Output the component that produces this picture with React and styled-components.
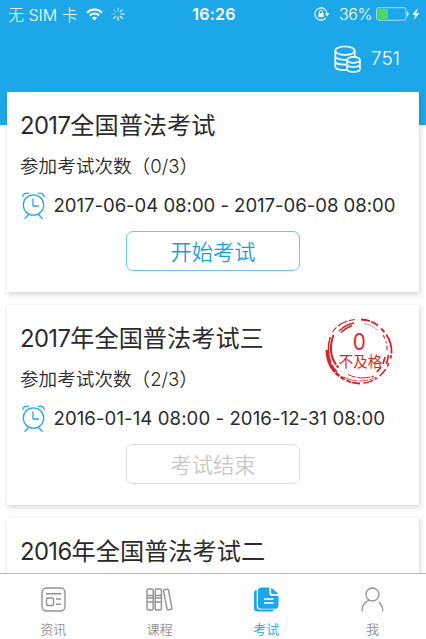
import React from "react";
import styled, { createGlobalStyle } from "styled-components";

const GlobalStyle = createGlobalStyle`
  * {
    box-sizing: border-box;
  }
  body {
    margin: 0;
    background: #fdfdfd;
    font-family: Inter, "Noto Sans CJK SC", sans-serif;
    color: #2b2b2b;
  }
`;

const Page = styled.div`
  width: 426px;
  height: 639px;
  display: flex;
  flex-direction: column;
  overflow: hidden;
`;

// Header
const Header = styled.header`
  flex: none;
  height: 125px;
  background: #1ca7e8;
  color: white;
`;

const StatusBar = styled.div`
  height: 28px;
  padding: 0 6px 0 8px;
  display: grid;
  grid-template-columns: 1fr auto 1fr;
  align-items: center;
  font-size: 16px;
`;

const StatusLeft = styled.div`
  display: flex;
  align-items: center;
  font-weight: 300;
  white-space: nowrap;

  svg {
    margin-left: 8px;
  }
`;

const Time = styled.div`
  font-weight: 600;
  letter-spacing: 0.2px;
`;

const StatusRight = styled.div`
  display: flex;
  align-items: center;
  justify-content: flex-end;
  font-weight: 300;
`;

const Percent = styled.span`
  margin: 0 4px 0 9px;
  letter-spacing: -0.4px;
`;

const Score = styled.div`
  display: flex;
  align-items: center;
  justify-content: flex-end;
  gap: 10px;
  height: 61px;
  padding-right: 26px;
  font-size: 19px;
  font-weight: 300;
  letter-spacing: -0.1px;
`;

// Exam list
const List = styled.main`
  flex: 1;
  min-height: 0;
  margin-top: -33px;
  padding: 0 7px;
  display: flex;
  flex-direction: column;
  gap: 13px;
  overflow: hidden;
`;

const Card = styled.section`
  flex: none;
  position: relative;
  height: 200px;
  padding: 18px 14px 0;
  background: white;
  box-shadow: 1px 2px 5px rgba(0, 0, 0, 0.17);
`;

const Title = styled.h2`
  margin: 0 0 0 -1px;
  height: 32px;
  line-height: 32px;
  font-size: 24.2px;
  font-weight: 370;
  white-space: nowrap;
`;

const Year = styled.span`
  font-size: 23.8px;
  letter-spacing: -0.6px;
`;

const Attempts = styled.p`
  margin: 11px 0 0 -1px;
  height: 26px;
  line-height: 26px;
  font-size: 18.6px;
  font-weight: 350;
  white-space: nowrap;
`;

const Period = styled.div`
  height: 28px;
  margin-top: 12px;
  display: flex;
  align-items: center;
  gap: 7.5px;
  font-size: 18.6px;
  font-weight: 370;
  letter-spacing: ${(props) => props.$tracking};
  white-space: nowrap;
`;

const ExamButton = styled.button`
  display: block;
  width: 174px;
  height: 40px;
  margin: 12px auto 0;
  padding: 0 0 2px;
  border: 1px solid ${(props) => (props.$ended ? "#dedede" : "#6dc6f0")};
  border-radius: 7px;
  background: white;
  color: ${(props) => (props.$ended ? "#c9c9c9" : "#1ca0e2")};
  font-family: inherit;
  font-size: 21.3px;
  font-weight: 350;
`;

const Stamp = styled.div`
  position: absolute;
  top: 12px;
  right: 25px;
  width: 70px;
  height: 70px;
  display: flex;
  flex-direction: column;
  align-items: center;
  color: #e21f26;

  svg {
    position: absolute;
    inset: 0;
  }
`;

const Mark = styled.span`
  margin-top: 12px;
  font-size: 23px;
  font-weight: 400;
  line-height: 26px;
  transform: scaleX(0.9);
`;

const Result = styled.span`
  margin-left: 3px;
  font-size: 14.5px;
  line-height: 13px;
  white-space: nowrap;
`;

// Bottom tabs
const TabBar = styled.nav`
  flex: none;
  position: relative;
  height: 66px;
  border-top: 1px solid #b9b9b9;
  background: #fdfdfd;
  display: grid;
  grid-template-columns: repeat(4, 1fr);
`;

const Tab = styled.div`
  display: flex;
  flex-direction: column;
  align-items: center;
  padding-top: 13px;
  color: ${(props) => (props.$active ? "#1ca7e8" : "#929292")};
  font-size: 13px;
  font-weight: 350;
  line-height: 18px;

  svg {
    margin-bottom: 8px;
  }
`;

const WifiIcon = () => (
  <svg width="17" height="13" viewBox="0 0 17 13" fill="none" stroke="white" strokeWidth="2">
    <path d="M1 4.7C5.2.5 11.8.5 16 4.7M3.8 7.5c2.6-2.6 6.8-2.6 9.4 0" />
    <path d="M8.5 12.4 6 9.8c1.4-1.4 3.6-1.4 5 0Z" fill="white" stroke="none" />
  </svg>
);

const SpinnerIcon = () => (
  <svg width="14" height="14" viewBox="0 0 14 14" stroke="white" strokeWidth="1.2" strokeLinecap="round">
    {[0.55, 0.8, 1, 1, 1, 0.9, 0.35, 0.35].map((opacity, i) => (
      <path key={i} d="M7 4V1" opacity={opacity} transform={`rotate(${i * 45} 7 7)`} />
    ))}
  </svg>
);

const LockIcon = () => (
  <svg width="16" height="14" viewBox="0 0 16 14" fill="none" stroke="white">
    <path d="M11.8 10.8A6.1 6.1 0 1 1 13.1 7" strokeWidth="1.1" />
    <path d="M10.7 6.5h4.8L13.1 9.3Z" fill="white" stroke="none" />
    <rect x="4.5" y="6.2" width="5" height="4" fill="white" stroke="none" />
    <path d="M5.4 6.5V5a1.6 1.6 0 0 1 3.2 0v1.5" />
  </svg>
);

const BatteryIcon = () => (
  <svg width="44" height="14" viewBox="0 0 44 14">
    <rect x=".5" y=".7" width="29.5" height="12.5" rx="2" fill="none" stroke="#a4dcf6" />
    <rect x="1.5" y="1.8" width="10.5" height="10.4" rx="1" fill="#4bd964" />
    <path d="M31 4.5c2 .5 2 4.5 0 5Z" fill="white" />
    <path d="m41.7 1-5.3 6.8h2.9L38 13l5.4-7h-3Z" fill="white" />
  </svg>
);

const CoinsIcon = () => (
  <svg width="27" height="28" viewBox="0 0 27 28" fill="none" stroke="white" strokeWidth="1.7">
    <ellipse cx="11" cy="5.7" rx="9.7" ry="4.2" />
    <path d="M1.3 5.7v16.2c0 1.8 4.6 3.3 11 3.3M20.7 5.7v5.1M1.3 11.3c0 2 4.7 3.7 11 3.5M1.3 16.7c0 1.7 4.4 3 10.7 3" />
    <ellipse cx="19.5" cy="14.9" rx="6.4" ry="3" />
    <path d="M13.1 14.9v9c0 1.8 2.8 3 6.4 3s6.4-1.2 6.4-3v-9M13.1 19.3c0 1.6 2.8 2.7 6.4 2.7s6.4-1.1 6.4-2.7" />
  </svg>
);

const ClockIcon = () => (
  <svg width="25" height="28" viewBox="0 0 25 28" fill="none" stroke="#25a9ea" strokeWidth="1.3" strokeLinecap="round">
    <circle cx="12.5" cy="14" r="10.2" />
    <path d="M12 8v7h5.5M7.3 23.7 4 27.2M17.6 23.7l3.5 3.5" />
    <path d="M1.8 5.5C2 3 4.8 1.4 7.6 2.3M23.2 5.5C23 3 20.2 1.4 17.4 2.3" />
  </svg>
);

// Rough ring made of broken brush strokes
const StampRing = () => (
  <svg width="70" height="70" viewBox="0 0 70 70" fill="none" stroke="#d71f27">
    <path d="M37 2.5c7 .3 12 2.5 17 6" strokeWidth="1.8" strokeDasharray="9 1.5 8 1" />
    <path d="M31 2.5C21 3.5 13 8 8.5 15" strokeWidth="1.2" strokeDasharray="6 1.5 11 2 9" />
    <path d="M57 11.5c9 8 12.5 20 9.5 30" strokeWidth="1.8" strokeDasharray="5 3 20 1.5 4 2" />
    <path d="M65 46c-5 12-15 19-27 20.5" strokeWidth="1.4" strokeDasharray="4 3 9 3 3 2 10" />
    <path d="M36 66.5c-6 0-11-1.5-16-4.5" strokeWidth="1.8" strokeDasharray="8 1 5 2" />
    <path d="M2.8 33C3 46 9 56 20 62" strokeWidth="2.6" strokeDasharray="24 1 5 1.5" />
    <path d="M6.2 20c-4 14-1 28 8 36" strokeWidth="1.5" strokeDasharray="26 2 9" />
    <path d="M9.5 18c-5 14-3 25 6.5 34" strokeWidth="2" strokeDasharray="31 1 3 2" />
    <path d="M20 60c9 5 22 5.5 32 0" strokeWidth=".8" strokeDasharray="14 2 9 1" />
    <path d="M24 57.5c8 4 17 4.5 26 1.5" strokeWidth="1" strokeDasharray="8 2 13 1" />
    <path d="M15 14c4-4 9-7 15-8M17 15.5c3-3 7-5.5 11-7" strokeWidth="1.5" />
    <path d="M40 6.5c6 1 10 3 14 7" strokeWidth=".5" />
    <path d="M59 18c3 5 4.5 10 4 17" strokeWidth="1.1" strokeDasharray="4 3 2 3" />
    <path d="m64.5 38-2 9M61 40l-2 7M57 50l-4 5" strokeWidth="1.7" />
  </svg>
);

const NewsIcon = () => (
  <svg width="25" height="25" viewBox="0 0 25 25" fill="none" stroke="currentColor" strokeWidth="1.4">
    <rect x="1" y="1" width="23" height="23" rx="4.5" />
    <rect x="5.5" y="11" width="7" height="7.5" rx="1.5" />
    <path d="M5 6.8h15M15 12h5M15 17.2h5" />
  </svg>
);

const BooksIcon = () => (
  <svg width="27" height="25" viewBox="0 0 27 25" fill="none" stroke="currentColor" strokeWidth="1.4">
    <rect x="1" y="2" width="6.2" height="21" rx="1.5" />
    <rect x="9.2" y="2" width="6.2" height="21" rx="1.5" />
    <path d="m18.2 2.8 3.1-.6c.6-.1 1 .1 1.1.7l3.5 18.2c.1.6-.1 1-.7 1.1l-3 .6c-.6.1-1-.1-1.1-.7L17.5 3.9c-.1-.6.1-1 .7-1.1Z" />
    <path d="M1 8.5h6.2M1 11h6.2M1 15h6.2M9.2 8.5h6.2M9.2 11h6.2M9.2 15h6.2" />
  </svg>
);

const ExamIcon = () => (
  <svg width="25" height="25" viewBox="0 0 25 25" fill="currentColor">
    <path d="M2.7 3v16.5c0 2 1 3 3 3H20c-.3 1.3-1.3 2-3 2H3.3C1.4 24.5 0 23.3 0 21.3V6c0-2 1-3 2.7-3Z" />
    <path d="M7.5.5h8v6c0 1.5.8 2.3 2.3 2.3h6.7v9.4c0 2.3-1.2 3.5-3.5 3.5H7.5C5 21.7 4 20.5 4 18.2V4C4 1.7 5.2.5 7.5.5Z" />
    <path d="M17.2.5 24.5 7h-6c-.8 0-1.3-.5-1.3-1.3Z" />
    <path d="M10 12h9.5M10 16h9.5" stroke="white" strokeWidth="1.3" />
  </svg>
);

const UserIcon = () => (
  <svg width="25" height="25" viewBox="0 0 25 25" fill="none" stroke="currentColor" strokeWidth="1.3">
    <circle cx="12.5" cy="7.5" r="6.5" />
    <path d="M9.5 13.2C4.5 15 2 19 2 24.3M18.8 15.3c2.5 2 4 5.2 4 9" />
  </svg>
);

const exams = [
  {
    year: "2017",
    name: "全国普法考试",
    attempts: "0/3",
    period: "2017-06-04 08:00 - 2017-06-08 08:00",
    tracking: "-0.05px",
    button: "开始考试",
  },
  {
    year: "2017",
    name: "年全国普法考试三",
    attempts: "2/3",
    period: "2016-01-14 08:00 - 2016-12-31 08:00",
    tracking: "0.08px",
    button: "考试结束",
    ended: true,
    mark: "0",
    result: "不及格",
  },
  { year: "2016", name: "年全国普法考试二" },
];

const tabs = [
  { label: "资讯", icon: NewsIcon },
  { label: "课程", icon: BooksIcon },
  { label: "考试", icon: ExamIcon, active: true },
  { label: "我", icon: UserIcon },
];

const ExamCard = ({ exam }) => (
  <Card>
    <Title>
      <Year>{exam.year}</Year>
      {exam.name}
    </Title>
    {exam.period && (
      <>
        <Attempts>参加考试次数（{exam.attempts}）</Attempts>
        <Period $tracking={exam.tracking}>
          <ClockIcon />
          <span>{exam.period}</span>
        </Period>
        <ExamButton $ended={exam.ended}>{exam.button}</ExamButton>
      </>
    )}
    {exam.result && (
      <Stamp>
        <StampRing />
        <Mark>{exam.mark}</Mark>
        <Result>{exam.result}</Result>
      </Stamp>
    )}
  </Card>
);

const App = () => {
  return (
    <Page>
      <GlobalStyle />
      <Header>
        <StatusBar>
          <StatusLeft>
            无 SIM 卡
            <WifiIcon />
            <SpinnerIcon />
          </StatusLeft>
          <Time>16:26</Time>
          <StatusRight>
            <LockIcon />
            <Percent>36%</Percent>
            <BatteryIcon />
          </StatusRight>
        </StatusBar>
        <Score>
          <CoinsIcon />
          751
        </Score>
      </Header>
      <List>
        {exams.map((exam) => (
          <ExamCard key={exam.year + exam.name} exam={exam} />
        ))}
      </List>
      <TabBar>
        {tabs.map(({ label, icon: Icon, active }) => (
          <Tab key={label} $active={active}>
            <Icon />
            {label}
          </Tab>
        ))}
      </TabBar>
    </Page>
  );
};

export default App;
